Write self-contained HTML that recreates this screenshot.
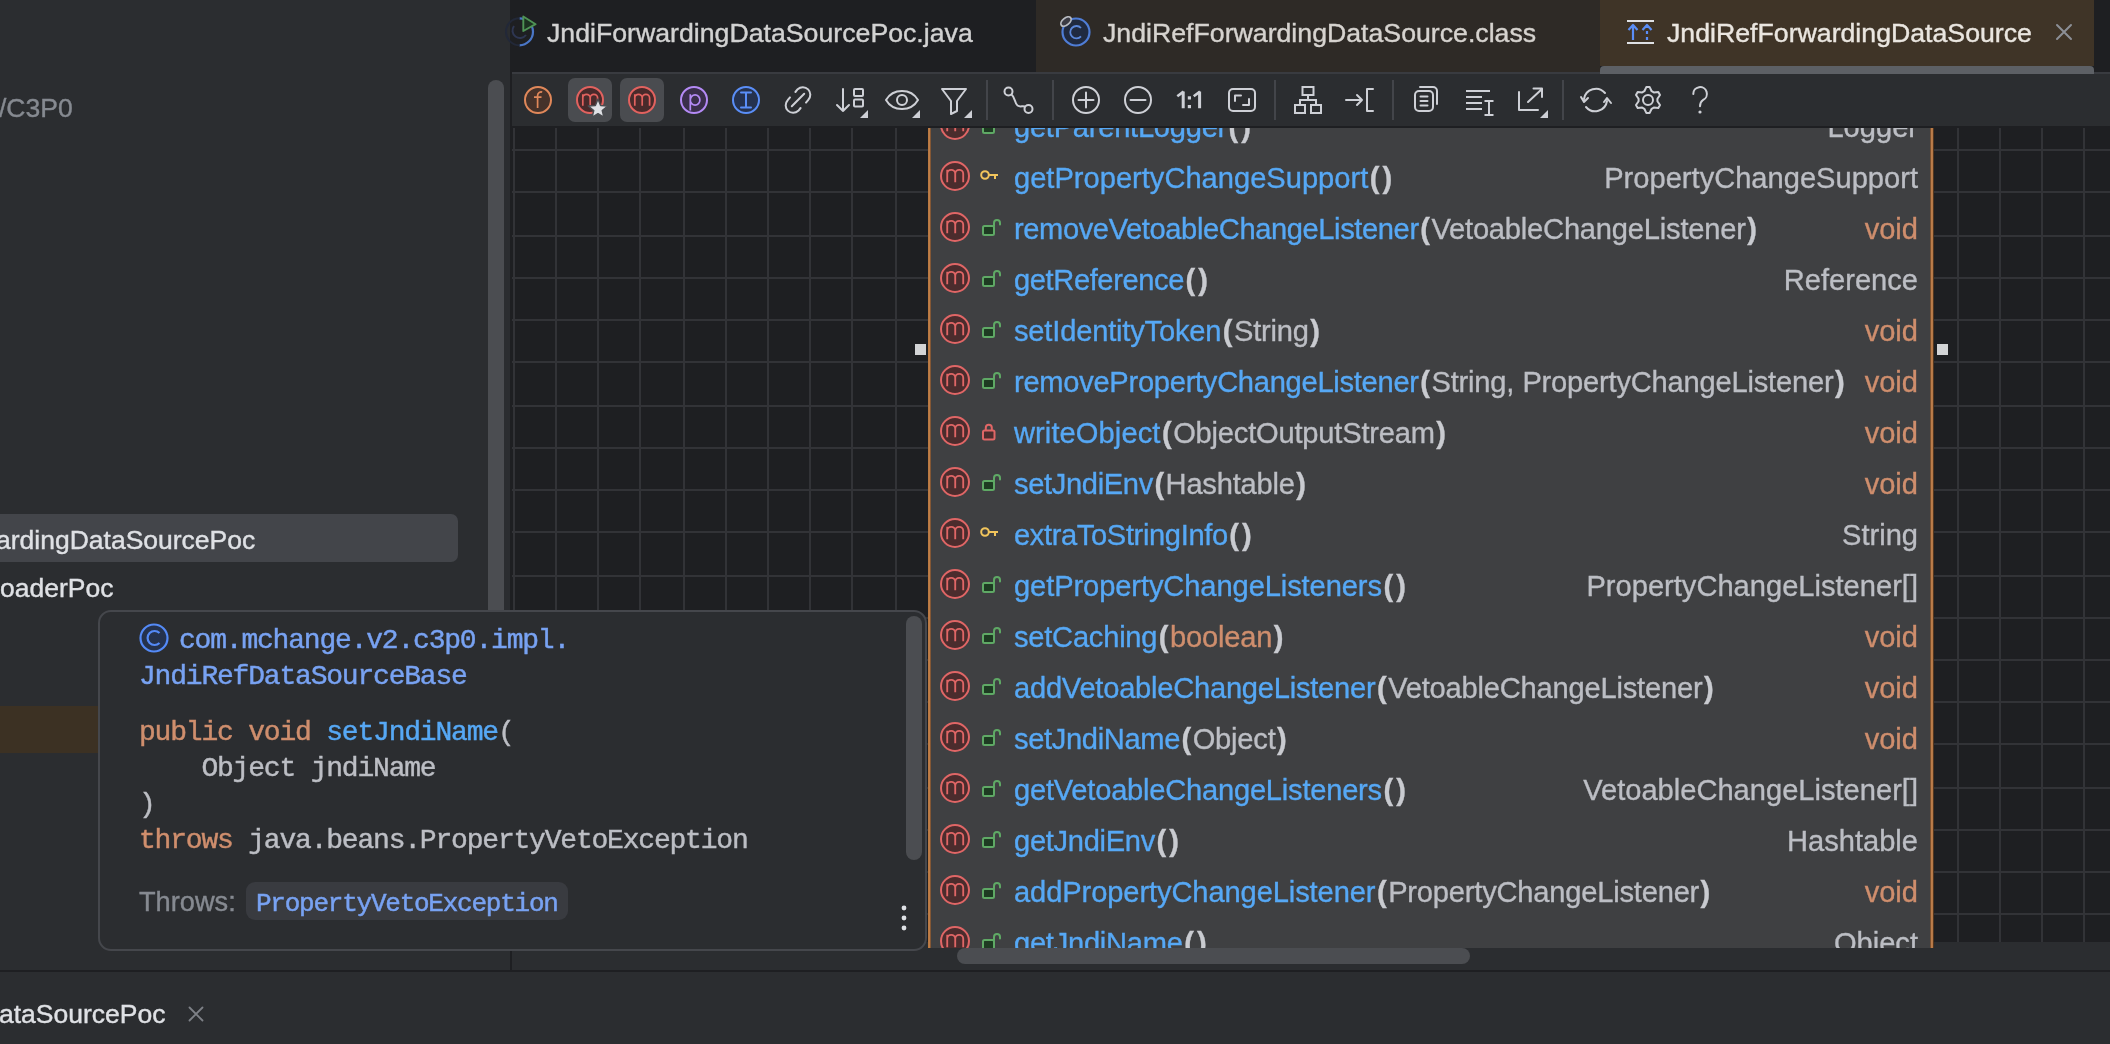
<!DOCTYPE html><html><head><meta charset="utf-8"><style>
*{margin:0;padding:0}
html,body{width:2110px;height:1044px;overflow:hidden;background:#2b2d30}
body{position:relative;font-family:'Liberation Sans', sans-serif}
.abs{position:absolute}
.t{position:absolute;white-space:pre;font-family:'Liberation Sans', sans-serif;-webkit-text-stroke:0.4px currentColor}
.row{position:absolute;left:86px;height:51px;line-height:51px;font-size:29.1px;white-space:pre;font-family:'Liberation Sans', sans-serif;color:#bcbec4;-webkit-text-stroke:0.35px currentColor}
.ret{position:absolute;right:16px;height:51px;line-height:51px;font-size:29.1px;white-space:pre;font-family:'Liberation Sans', sans-serif;-webkit-text-stroke:0.35px currentColor}
.pr{font-weight:bold;color:#c9cbd0;padding:0 1.5px;letter-spacing:0}
.code{position:absolute;font-family:'Liberation Mono', monospace;font-size:28px;letter-spacing:-1.2px;line-height:36px;white-space:pre;-webkit-text-stroke:0.45px currentColor}
</style></head><body><div style="position:absolute;left:0;top:0;width:2110px;height:1044px;overflow:hidden;will-change:transform"><div class="t" style="left:-1px;top:90px;font-size:26.5px;line-height:36px;color:#868a91">/C3P0</div><div class="abs" style="left:-10px;top:514px;width:468px;height:48px;border-radius:7px;background:#43454a"></div><div class="t" style="left:-4px;top:522px;font-size:26.5px;line-height:36px;color:#dfe1e5">ardingDataSourcePoc</div><div class="t" style="left:0px;top:570px;font-size:26.5px;line-height:36px;color:#dfe1e5">oaderPoc</div><div class="abs" style="left:0;top:706px;width:100px;height:47px;background:#3c3123"></div><div class="abs" style="left:488px;top:80px;width:16px;height:560px;border-radius:8px;background:#4b4d51"></div><div class="abs" style="left:510px;top:0;width:2px;height:970px;background:#1e1f22"></div><div class="abs" style="left:512px;top:0;width:1598px;height:72px;background:#1e1f22"></div><div class="abs" style="left:1036px;top:0;width:564px;height:72px;background:#2e2a26"></div><div class="abs" style="left:1600px;top:0;width:494px;height:66px;background:#3f3427"></div><div class="t" style="left:547px;top:15px;font-size:26.7px;line-height:36px;color:#d2d2d2">JndiForwardingDataSourcePoc.java</div><div class="t" style="left:1103px;top:15px;font-size:26.7px;line-height:36px;color:#d6d3cf">JndiRefForwardingDataSource.class</div><div class="t" style="left:1667px;top:15px;font-size:26.7px;line-height:36px;color:#eae6e0">JndiRefForwardingDataSource</div><svg style="position:absolute;left:0;top:0" width="2110" height="72" fill="none"><path d="M519.5 18.3 A13.5 13.5 0 0 1 519.5 45.3" stroke="#4a76c6" stroke-width="2.2"/><path d="M519.5 45.3 A13.5 13.5 0 0 1 519.5 18.3" stroke="#222838" stroke-width="2"/><path d="M514 26 A7 7 0 1 0 526 35" stroke="#2e3652" stroke-width="2"/><path d="M523.3 16.5 L535.6 24.2 L523.3 31 Z" stroke="#4f9355" stroke-width="1.9" fill="#1c3020" stroke-linejoin="round"/><circle cx="1076" cy="32" r="13.5" stroke="#4f7dd6" stroke-width="2.2" fill="#202a40"/><path d="M1081 28 a6.2 6.2 0 1 0 0 8.4" stroke="#5b87d9" stroke-width="1.8"/><ellipse cx="1066" cy="21.5" rx="6" ry="3.5" transform="rotate(-40 1066 21.5)" stroke="#b9bcc2" stroke-width="1.8" fill="#3b3b44"/><path d="M1627 21h27M1627 43h27" stroke="#dfe1e5" stroke-width="2"/><path d="M1633 40v-15M1628.5 30l4.5-5 4.5 5" stroke="#5a8ef7" stroke-width="2.2" stroke-linejoin="round"/><path d="M1647 40v-3M1647 34v-3M1647 28v-3M1642.5 30l4.5-5 4.5 5" stroke="#5a8ef7" stroke-width="2.2" stroke-linejoin="round"/><path d="M2057 25l14 14M2071 25l-14 14" stroke="#8c8f96" stroke-width="2" stroke-linecap="round"/></svg><div class="abs" style="left:512px;top:72px;width:1598px;height:2px;background:#393b40"></div><div class="abs" style="left:512px;top:74px;width:1598px;height:52px;background:#2b2d30"></div><div class="abs" style="left:512px;top:126px;width:1598px;height:2px;background:#1e1f22"></div><div class="abs" style="left:1600px;top:66px;width:494px;height:8px;border-radius:4px 4px 0 0;background:#5d6065"></div><svg style="position:absolute;left:0;top:0" width="2110" height="130" fill="none" stroke-linecap="round" stroke-linejoin="round"><rect x="568" y="78" width="44" height="44" rx="7" fill="#4a4c50"/><rect x="620" y="78" width="44" height="44" rx="7" fill="#4a4c50"/><circle cx="538" cy="100" r="13" stroke="#e0885a" stroke-width="2" fill="#45322a"/><path d="M537.6 108 V95.5 a3.6 3.6 0 0 1 4.6 -3.4 M534 97.2 h7.5" stroke="#e0885a" stroke-width="1.7" stroke-linecap="butt"/><circle cx="590" cy="100" r="13" stroke="#e2625f" stroke-width="2" fill="#492a2b"/><path transform="translate(-52,0)" d="M634.8 105.7 V94.3 M634.8 98 a3.7 3.7 0 0 1 7.4 0 V105.7 M642.2 98 a3.7 3.7 0 0 1 7.4 0 V105.7" stroke="#e2625f" stroke-width="1.7" stroke-linecap="butt"/><polygon points="598.00,99.00 600.65,105.56 607.70,106.05 602.28,110.59 604.00,117.45 598.00,113.70 592.00,117.45 593.72,110.59 588.30,106.05 595.35,105.56" fill="#dfe1e5" stroke="#4a4c50" stroke-width="1.5"/><circle cx="642" cy="100" r="13" stroke="#e2625f" stroke-width="2" fill="#492a2b"/><path transform="translate(0,0)" d="M634.8 105.7 V94.3 M634.8 98 a3.7 3.7 0 0 1 7.4 0 V105.7 M642.2 98 a3.7 3.7 0 0 1 7.4 0 V105.7" stroke="#e2625f" stroke-width="1.7" stroke-linecap="butt"/><circle cx="694" cy="100" r="13" stroke="#b48af5" stroke-width="2" fill="#3a2e4b"/><path d="M690.3 94.3 V110.5 M690.3 100 a4.8 5.2 0 1 0 9.6 0 a4.8 5.2 0 1 0 -9.6 0" stroke="#b48af5" stroke-width="1.7" stroke-linecap="butt"/><circle cx="746" cy="100" r="13" stroke="#5a8ef7" stroke-width="2" fill="#25324f"/><path d="M741 92.5h10M746 92.5v15M741 107.5h10" stroke="#5a8ef7" stroke-width="2"/><g stroke="#ced0d6" stroke-width="2"><path d="M795.4 92 L797.7 89.2 A7.5 7.5 0 0 1 808.3 99.8 L806 102.6"/><path d="M800.6 108 L798.3 110.8 A7.5 7.5 0 0 1 787.7 100.2 L790 97.4"/><path d="M791.8 106.2 L804.2 93.8"/></g><g stroke="#ced0d6" stroke-width="2"><path d="M843 89v22M837 105l6 6 6-6"/><rect x="854" y="89" width="9" height="7" rx="1"/><rect x="854" y="99.5" width="9" height="7" rx="1"/></g><path d="M868 110 v8 h-8 z" fill="#ced0d6" stroke="none"/><g stroke="#ced0d6" stroke-width="2"><path d="M886 100 C893 88, 911 88, 918 100 C911 112, 893 112, 886 100 Z"/><circle cx="902" cy="100" r="5"/></g><path d="M920 110 v8 h-8 z" fill="#ced0d6" stroke="none"/><path d="M942 89 h24 l-9 12 v10 l-6 3 v-13 z" stroke="#ced0d6" stroke-width="2"/><path d="M972 110 v8 h-8 z" fill="#ced0d6" stroke="none"/><rect x="986" y="80" width="2" height="40" fill="#43454a" stroke="none"/><g stroke="#ced0d6" stroke-width="2"><circle cx="1008.5" cy="91.5" r="4"/><circle cx="1028.5" cy="109" r="4"/><path d="M1011.5 94.5 c4 3 3 9 6 11 s5 0 7 1"/></g><rect x="1052" y="80" width="2" height="40" fill="#43454a" stroke="none"/><g stroke="#ced0d6" stroke-width="2"><circle cx="1086" cy="100" r="13"/><path d="M1078.5 100h15M1086 92.5v15"/><circle cx="1138" cy="100" r="13"/><path d="M1130.5 100h15"/></g><g stroke="#ced0d6" stroke-linecap="butt"><path d="M1183.2 91.5 V108.2 M1199.6 91.5 V108.2" stroke-width="3"/><path d="M1177.3 96.3 L1183.6 91.6 M1193.7 96.3 L1200 91.6" stroke-width="2.6" stroke-linejoin="miter"/></g><rect x="1187.8" y="96.3" width="3.2" height="3.2" fill="#ced0d6" stroke="none"/><rect x="1187.8" y="105" width="3.2" height="3.2" fill="#ced0d6" stroke="none"/><g stroke="#ced0d6" stroke-width="2"><rect x="1229" y="89" width="26" height="22" rx="4"/><path d="M1235 101v-5.5h6M1249 99v6h-6"/></g><rect x="1274" y="80" width="2" height="40" fill="#43454a" stroke="none"/><g stroke="#ced0d6" stroke-width="2" stroke-linecap="butt" stroke-linejoin="miter"><rect x="1302.5" y="87" width="11" height="8"/><rect x="1295" y="105" width="10" height="8"/><rect x="1311" y="105" width="10" height="8"/><path d="M1308 95v5M1300 105v-5h16v5"/></g><g stroke="#ced0d6" stroke-width="2"><path d="M1346 100h16M1357 95l5 5-5 5"/><path d="M1373 89h-6v22h6"/></g><rect x="1392" y="80" width="2" height="40" fill="#43454a" stroke="none"/><g stroke="#ced0d6" stroke-width="2"><path d="M1420 87 h13 a4 4 0 0 1 4 4 v13"/><rect x="1415" y="91" width="18" height="20" rx="4"/><path d="M1420.5 96.5h7M1420.5 101h7M1420.5 105.5h7"/></g><g stroke="#ced0d6" stroke-width="2" stroke-linecap="butt"><path d="M1466 91h24M1466 97h16M1466 103h16M1466 109h16"/><path d="M1489 101v14M1484.5 101h9M1484.5 115h9"/></g><g stroke="#ced0d6" stroke-width="2"><path d="M1519 92v18h19"/><path d="M1528 102l14-13M1533.5 88.5h8.5v8.5"/></g><path d="M1548 110 v8 h-8 z" fill="#ced0d6" stroke="none"/><rect x="1562" y="80" width="2" height="40" fill="#43454a" stroke="none"/><g stroke="#ced0d6" stroke-width="2"><path d="M1584 99 a12 12 0 0 1 21-6"/><path d="M1581 97l3 5 4-4"/><path d="M1607 101 a12 12 0 0 1 -21 6"/><path d="M1611 103l-4-5-3 4"/></g><polygon points="1646.30,87.11 1649.70,87.11 1651.64,91.22 1653.78,92.46 1658.31,92.09 1660.01,95.03 1657.42,98.76 1657.42,101.24 1660.01,104.97 1658.31,107.91 1653.78,107.54 1651.64,108.78 1649.70,112.89 1646.30,112.89 1644.36,108.78 1642.22,107.54 1637.69,107.91 1635.99,104.97 1638.58,101.24 1638.58,98.76 1635.99,95.03 1637.69,92.09 1642.22,92.46 1644.36,91.22" stroke="#ced0d6" stroke-width="2"/><circle cx="1648" cy="100" r="5" stroke="#ced0d6" stroke-width="2"/><g stroke="#ced0d6" stroke-width="2"><path d="M1693.3 94 a6.8 6.8 0 1 1 9.7 6 c-2.8 2 -3 3.5 -3 6.3"/></g><circle cx="1700" cy="112" r="1.6" fill="#ced0d6"/></svg><div class="abs" style="left:512px;top:128px;width:1598px;height:814px;background:#1e1f22"></div><svg style="position:absolute;left:512px;top:128px" width="1598" height="814"><rect x="1" y="0" width="2" height="814" fill="#323337"/><rect x="43" y="0" width="2" height="814" fill="#323337"/><rect x="85" y="0" width="2" height="814" fill="#323337"/><rect x="127" y="0" width="2" height="814" fill="#323337"/><rect x="171" y="0" width="2" height="814" fill="#323337"/><rect x="213" y="0" width="2" height="814" fill="#323337"/><rect x="255" y="0" width="2" height="814" fill="#323337"/><rect x="297" y="0" width="2" height="814" fill="#323337"/><rect x="339" y="0" width="2" height="814" fill="#323337"/><rect x="383" y="0" width="2" height="814" fill="#323337"/><rect x="1445" y="0" width="2" height="814" fill="#323337"/><rect x="1487" y="0" width="2" height="814" fill="#323337"/><rect x="1529" y="0" width="2" height="814" fill="#323337"/><rect x="1571" y="0" width="2" height="814" fill="#323337"/><rect x="0" y="21" width="1598" height="2" fill="#323337"/><rect x="0" y="63" width="1598" height="2" fill="#323337"/><rect x="0" y="107" width="1598" height="2" fill="#323337"/><rect x="0" y="149" width="1598" height="2" fill="#323337"/><rect x="0" y="191" width="1598" height="2" fill="#323337"/><rect x="0" y="233" width="1598" height="2" fill="#323337"/><rect x="0" y="277" width="1598" height="2" fill="#323337"/><rect x="0" y="319" width="1598" height="2" fill="#323337"/><rect x="0" y="361" width="1598" height="2" fill="#323337"/><rect x="0" y="403" width="1598" height="2" fill="#323337"/><rect x="0" y="447" width="1598" height="2" fill="#323337"/><rect x="0" y="489" width="1598" height="2" fill="#323337"/><rect x="0" y="531" width="1598" height="2" fill="#323337"/><rect x="0" y="573" width="1598" height="2" fill="#323337"/><rect x="0" y="615" width="1598" height="2" fill="#323337"/><rect x="0" y="659" width="1598" height="2" fill="#323337"/><rect x="0" y="701" width="1598" height="2" fill="#323337"/><rect x="0" y="743" width="1598" height="2" fill="#323337"/><rect x="0" y="785" width="1598" height="2" fill="#323337"/></svg><div class="abs" style="left:512px;top:942px;width:1598px;height:28px;background:#2b2d30"></div><div style="position:absolute;left:928px;top:128px;width:1006px;height:820px;background:#3f4042;overflow:hidden"><div style="position:absolute;left:0;top:0;width:3px;height:820px;background:linear-gradient(90deg,#b8763f 0,#c0804a 66%,#4a3020 100%)"></div><div style="position:absolute;right:0;top:0;width:4px;height:820px;background:linear-gradient(90deg,#3a2616 0,#b97a48 25%,#bf7f4c 60%,#5a3a20 85%,#2a1d12 100%)"></div><svg style="position:absolute;left:0;top:0" width="1006" height="820" fill="none"><circle cx="27" cy="-3" r="14" stroke="#e06666" stroke-width="2" fill="#4b2c2d"/><path transform="translate(27,-3) scale(1.08)" d="M-7.2 5.7 V-5.7 M-7.2 -2 a3.7 3.7 0 0 1 7.4 0 V5.7 M0.2 -2 a3.7 3.7 0 0 1 7.4 0 V5.7" stroke="#e06666" stroke-width="1.7" stroke-linecap="butt"/><rect x="55" y="-4" width="11" height="9" rx="1.5" stroke="#5fa965" stroke-width="2" fill="#1e3b22"/><path d="M66 -4 v-3 a3 3 0 0 1 6 0 v1.5" stroke="#5fa965" stroke-width="2" stroke-linecap="round"/><circle cx="27" cy="48" r="14" stroke="#e06666" stroke-width="2" fill="#4b2c2d"/><path transform="translate(27,48) scale(1.08)" d="M-7.2 5.7 V-5.7 M-7.2 -2 a3.7 3.7 0 0 1 7.4 0 V5.7 M0.2 -2 a3.7 3.7 0 0 1 7.4 0 V5.7" stroke="#e06666" stroke-width="1.7" stroke-linecap="butt"/><circle cx="57" cy="47" r="3.8" stroke="#f2c55c" stroke-width="2"/><path d="M61 47 h9 M67 47 v4" stroke="#f2c55c" stroke-width="2"/><circle cx="27" cy="99" r="14" stroke="#e06666" stroke-width="2" fill="#4b2c2d"/><path transform="translate(27,99) scale(1.08)" d="M-7.2 5.7 V-5.7 M-7.2 -2 a3.7 3.7 0 0 1 7.4 0 V5.7 M0.2 -2 a3.7 3.7 0 0 1 7.4 0 V5.7" stroke="#e06666" stroke-width="1.7" stroke-linecap="butt"/><rect x="55" y="98" width="11" height="9" rx="1.5" stroke="#5fa965" stroke-width="2" fill="#1e3b22"/><path d="M66 98 v-3 a3 3 0 0 1 6 0 v1.5" stroke="#5fa965" stroke-width="2" stroke-linecap="round"/><circle cx="27" cy="150" r="14" stroke="#e06666" stroke-width="2" fill="#4b2c2d"/><path transform="translate(27,150) scale(1.08)" d="M-7.2 5.7 V-5.7 M-7.2 -2 a3.7 3.7 0 0 1 7.4 0 V5.7 M0.2 -2 a3.7 3.7 0 0 1 7.4 0 V5.7" stroke="#e06666" stroke-width="1.7" stroke-linecap="butt"/><rect x="55" y="149" width="11" height="9" rx="1.5" stroke="#5fa965" stroke-width="2" fill="#1e3b22"/><path d="M66 149 v-3 a3 3 0 0 1 6 0 v1.5" stroke="#5fa965" stroke-width="2" stroke-linecap="round"/><circle cx="27" cy="201" r="14" stroke="#e06666" stroke-width="2" fill="#4b2c2d"/><path transform="translate(27,201) scale(1.08)" d="M-7.2 5.7 V-5.7 M-7.2 -2 a3.7 3.7 0 0 1 7.4 0 V5.7 M0.2 -2 a3.7 3.7 0 0 1 7.4 0 V5.7" stroke="#e06666" stroke-width="1.7" stroke-linecap="butt"/><rect x="55" y="200" width="11" height="9" rx="1.5" stroke="#5fa965" stroke-width="2" fill="#1e3b22"/><path d="M66 200 v-3 a3 3 0 0 1 6 0 v1.5" stroke="#5fa965" stroke-width="2" stroke-linecap="round"/><circle cx="27" cy="252" r="14" stroke="#e06666" stroke-width="2" fill="#4b2c2d"/><path transform="translate(27,252) scale(1.08)" d="M-7.2 5.7 V-5.7 M-7.2 -2 a3.7 3.7 0 0 1 7.4 0 V5.7 M0.2 -2 a3.7 3.7 0 0 1 7.4 0 V5.7" stroke="#e06666" stroke-width="1.7" stroke-linecap="butt"/><rect x="55" y="251" width="11" height="9" rx="1.5" stroke="#5fa965" stroke-width="2" fill="#1e3b22"/><path d="M66 251 v-3 a3 3 0 0 1 6 0 v1.5" stroke="#5fa965" stroke-width="2" stroke-linecap="round"/><circle cx="27" cy="303" r="14" stroke="#e06666" stroke-width="2" fill="#4b2c2d"/><path transform="translate(27,303) scale(1.08)" d="M-7.2 5.7 V-5.7 M-7.2 -2 a3.7 3.7 0 0 1 7.4 0 V5.7 M0.2 -2 a3.7 3.7 0 0 1 7.4 0 V5.7" stroke="#e06666" stroke-width="1.7" stroke-linecap="butt"/><rect x="55" y="302.5" width="11.5" height="9" rx="1.5" stroke="#e06666" stroke-width="2" fill="#4b2c2d"/><path d="M57.8 302.5 v-2.8 a3 3 0 0 1 6 0 v2.8" stroke="#e06666" stroke-width="2"/><circle cx="27" cy="354" r="14" stroke="#e06666" stroke-width="2" fill="#4b2c2d"/><path transform="translate(27,354) scale(1.08)" d="M-7.2 5.7 V-5.7 M-7.2 -2 a3.7 3.7 0 0 1 7.4 0 V5.7 M0.2 -2 a3.7 3.7 0 0 1 7.4 0 V5.7" stroke="#e06666" stroke-width="1.7" stroke-linecap="butt"/><rect x="55" y="353" width="11" height="9" rx="1.5" stroke="#5fa965" stroke-width="2" fill="#1e3b22"/><path d="M66 353 v-3 a3 3 0 0 1 6 0 v1.5" stroke="#5fa965" stroke-width="2" stroke-linecap="round"/><circle cx="27" cy="405" r="14" stroke="#e06666" stroke-width="2" fill="#4b2c2d"/><path transform="translate(27,405) scale(1.08)" d="M-7.2 5.7 V-5.7 M-7.2 -2 a3.7 3.7 0 0 1 7.4 0 V5.7 M0.2 -2 a3.7 3.7 0 0 1 7.4 0 V5.7" stroke="#e06666" stroke-width="1.7" stroke-linecap="butt"/><circle cx="57" cy="404" r="3.8" stroke="#f2c55c" stroke-width="2"/><path d="M61 404 h9 M67 404 v4" stroke="#f2c55c" stroke-width="2"/><circle cx="27" cy="456" r="14" stroke="#e06666" stroke-width="2" fill="#4b2c2d"/><path transform="translate(27,456) scale(1.08)" d="M-7.2 5.7 V-5.7 M-7.2 -2 a3.7 3.7 0 0 1 7.4 0 V5.7 M0.2 -2 a3.7 3.7 0 0 1 7.4 0 V5.7" stroke="#e06666" stroke-width="1.7" stroke-linecap="butt"/><rect x="55" y="455" width="11" height="9" rx="1.5" stroke="#5fa965" stroke-width="2" fill="#1e3b22"/><path d="M66 455 v-3 a3 3 0 0 1 6 0 v1.5" stroke="#5fa965" stroke-width="2" stroke-linecap="round"/><circle cx="27" cy="507" r="14" stroke="#e06666" stroke-width="2" fill="#4b2c2d"/><path transform="translate(27,507) scale(1.08)" d="M-7.2 5.7 V-5.7 M-7.2 -2 a3.7 3.7 0 0 1 7.4 0 V5.7 M0.2 -2 a3.7 3.7 0 0 1 7.4 0 V5.7" stroke="#e06666" stroke-width="1.7" stroke-linecap="butt"/><rect x="55" y="506" width="11" height="9" rx="1.5" stroke="#5fa965" stroke-width="2" fill="#1e3b22"/><path d="M66 506 v-3 a3 3 0 0 1 6 0 v1.5" stroke="#5fa965" stroke-width="2" stroke-linecap="round"/><circle cx="27" cy="558" r="14" stroke="#e06666" stroke-width="2" fill="#4b2c2d"/><path transform="translate(27,558) scale(1.08)" d="M-7.2 5.7 V-5.7 M-7.2 -2 a3.7 3.7 0 0 1 7.4 0 V5.7 M0.2 -2 a3.7 3.7 0 0 1 7.4 0 V5.7" stroke="#e06666" stroke-width="1.7" stroke-linecap="butt"/><rect x="55" y="557" width="11" height="9" rx="1.5" stroke="#5fa965" stroke-width="2" fill="#1e3b22"/><path d="M66 557 v-3 a3 3 0 0 1 6 0 v1.5" stroke="#5fa965" stroke-width="2" stroke-linecap="round"/><circle cx="27" cy="609" r="14" stroke="#e06666" stroke-width="2" fill="#4b2c2d"/><path transform="translate(27,609) scale(1.08)" d="M-7.2 5.7 V-5.7 M-7.2 -2 a3.7 3.7 0 0 1 7.4 0 V5.7 M0.2 -2 a3.7 3.7 0 0 1 7.4 0 V5.7" stroke="#e06666" stroke-width="1.7" stroke-linecap="butt"/><rect x="55" y="608" width="11" height="9" rx="1.5" stroke="#5fa965" stroke-width="2" fill="#1e3b22"/><path d="M66 608 v-3 a3 3 0 0 1 6 0 v1.5" stroke="#5fa965" stroke-width="2" stroke-linecap="round"/><circle cx="27" cy="660" r="14" stroke="#e06666" stroke-width="2" fill="#4b2c2d"/><path transform="translate(27,660) scale(1.08)" d="M-7.2 5.7 V-5.7 M-7.2 -2 a3.7 3.7 0 0 1 7.4 0 V5.7 M0.2 -2 a3.7 3.7 0 0 1 7.4 0 V5.7" stroke="#e06666" stroke-width="1.7" stroke-linecap="butt"/><rect x="55" y="659" width="11" height="9" rx="1.5" stroke="#5fa965" stroke-width="2" fill="#1e3b22"/><path d="M66 659 v-3 a3 3 0 0 1 6 0 v1.5" stroke="#5fa965" stroke-width="2" stroke-linecap="round"/><circle cx="27" cy="711" r="14" stroke="#e06666" stroke-width="2" fill="#4b2c2d"/><path transform="translate(27,711) scale(1.08)" d="M-7.2 5.7 V-5.7 M-7.2 -2 a3.7 3.7 0 0 1 7.4 0 V5.7 M0.2 -2 a3.7 3.7 0 0 1 7.4 0 V5.7" stroke="#e06666" stroke-width="1.7" stroke-linecap="butt"/><rect x="55" y="710" width="11" height="9" rx="1.5" stroke="#5fa965" stroke-width="2" fill="#1e3b22"/><path d="M66 710 v-3 a3 3 0 0 1 6 0 v1.5" stroke="#5fa965" stroke-width="2" stroke-linecap="round"/><circle cx="27" cy="762" r="14" stroke="#e06666" stroke-width="2" fill="#4b2c2d"/><path transform="translate(27,762) scale(1.08)" d="M-7.2 5.7 V-5.7 M-7.2 -2 a3.7 3.7 0 0 1 7.4 0 V5.7 M0.2 -2 a3.7 3.7 0 0 1 7.4 0 V5.7" stroke="#e06666" stroke-width="1.7" stroke-linecap="butt"/><rect x="55" y="761" width="11" height="9" rx="1.5" stroke="#5fa965" stroke-width="2" fill="#1e3b22"/><path d="M66 761 v-3 a3 3 0 0 1 6 0 v1.5" stroke="#5fa965" stroke-width="2" stroke-linecap="round"/><circle cx="27" cy="813" r="14" stroke="#e06666" stroke-width="2" fill="#4b2c2d"/><path transform="translate(27,813) scale(1.08)" d="M-7.2 5.7 V-5.7 M-7.2 -2 a3.7 3.7 0 0 1 7.4 0 V5.7 M0.2 -2 a3.7 3.7 0 0 1 7.4 0 V5.7" stroke="#e06666" stroke-width="1.7" stroke-linecap="butt"/><rect x="55" y="812" width="11" height="9" rx="1.5" stroke="#5fa965" stroke-width="2" fill="#1e3b22"/><path d="M66 812 v-3 a3 3 0 0 1 6 0 v1.5" stroke="#5fa965" stroke-width="2" stroke-linecap="round"/></svg><div class="row" style="top:-26px"><span style="color:#56a8f5;letter-spacing:-0.250px">getParentLogger</span><b class="pr">(</b><b class="pr">)</b></div><div class="ret" style="top:-26px;color:#bcbec4">Logger</div><div class="row" style="top:25px"><span style="color:#56a8f5;letter-spacing:0.000px">getPropertyChangeSupport</span><b class="pr">(</b><b class="pr">)</b></div><div class="ret" style="top:25px;color:#bcbec4">PropertyChangeSupport</div><div class="row" style="top:76px"><span style="color:#56a8f5;letter-spacing:-0.392px">removeVetoableChangeListener</span><b class="pr">(</b><span style="color:#bcbec4;letter-spacing:-0.2px">VetoableChangeListener</span><b class="pr">)</b></div><div class="ret" style="top:76px;color:#cf8e6d">void</div><div class="row" style="top:127px"><span style="color:#56a8f5;letter-spacing:-0.393px">getReference</span><b class="pr">(</b><b class="pr">)</b></div><div class="ret" style="top:127px;color:#bcbec4">Reference</div><div class="row" style="top:178px"><span style="color:#56a8f5;letter-spacing:-0.187px">setIdentityToken</span><b class="pr">(</b><span style="color:#bcbec4;letter-spacing:-0.2px">String</span><b class="pr">)</b></div><div class="ret" style="top:178px;color:#cf8e6d">void</div><div class="row" style="top:229px"><span style="color:#56a8f5;letter-spacing:-0.274px">removePropertyChangeListener</span><b class="pr">(</b><span style="color:#bcbec4;letter-spacing:-0.2px">String</span><span style="color:#bcbec4">, </span><span style="color:#bcbec4;letter-spacing:-0.2px">PropertyChangeListener</span><b class="pr">)</b></div><div class="ret" style="top:229px;color:#cf8e6d">void</div><div class="row" style="top:280px"><span style="color:#56a8f5;letter-spacing:0.087px">writeObject</span><b class="pr">(</b><span style="color:#bcbec4;letter-spacing:-0.2px">ObjectOutputStream</span><b class="pr">)</b></div><div class="ret" style="top:280px;color:#cf8e6d">void</div><div class="row" style="top:331px"><span style="color:#56a8f5;letter-spacing:-0.345px">setJndiEnv</span><b class="pr">(</b><span style="color:#bcbec4;letter-spacing:-0.2px">Hashtable</span><b class="pr">)</b></div><div class="ret" style="top:331px;color:#cf8e6d">void</div><div class="row" style="top:382px"><span style="color:#56a8f5;letter-spacing:-0.364px">extraToStringInfo</span><b class="pr">(</b><b class="pr">)</b></div><div class="ret" style="top:382px;color:#bcbec4">String</div><div class="row" style="top:433px"><span style="color:#56a8f5;letter-spacing:-0.094px">getPropertyChangeListeners</span><b class="pr">(</b><b class="pr">)</b></div><div class="ret" style="top:433px;color:#bcbec4">PropertyChangeListener[]</div><div class="row" style="top:484px"><span style="color:#56a8f5;letter-spacing:-0.229px">setCaching</span><b class="pr">(</b><span style="color:#cf8e6d;letter-spacing:-0.2px">boolean</span><b class="pr">)</b></div><div class="ret" style="top:484px;color:#cf8e6d">void</div><div class="row" style="top:535px"><span style="color:#56a8f5;letter-spacing:-0.232px">addVetoableChangeListener</span><b class="pr">(</b><span style="color:#bcbec4;letter-spacing:-0.2px">VetoableChangeListener</span><b class="pr">)</b></div><div class="ret" style="top:535px;color:#cf8e6d">void</div><div class="row" style="top:586px"><span style="color:#56a8f5;letter-spacing:-0.348px">setJndiName</span><b class="pr">(</b><span style="color:#bcbec4;letter-spacing:-0.2px">Object</span><b class="pr">)</b></div><div class="ret" style="top:586px;color:#cf8e6d">void</div><div class="row" style="top:637px"><span style="color:#56a8f5;letter-spacing:-0.221px">getVetoableChangeListeners</span><b class="pr">(</b><b class="pr">)</b></div><div class="ret" style="top:637px;color:#bcbec4">VetoableChangeListener[]</div><div class="row" style="top:688px"><span style="color:#56a8f5;letter-spacing:-0.298px">getJndiEnv</span><b class="pr">(</b><b class="pr">)</b></div><div class="ret" style="top:688px;color:#bcbec4">Hashtable</div><div class="row" style="top:739px"><span style="color:#56a8f5;letter-spacing:-0.100px">addPropertyChangeListener</span><b class="pr">(</b><span style="color:#bcbec4;letter-spacing:-0.2px">PropertyChangeListener</span><b class="pr">)</b></div><div class="ret" style="top:739px;color:#cf8e6d">void</div><div class="row" style="top:790px"><span style="color:#56a8f5;letter-spacing:-0.250px">getJndiName</span><b class="pr">(</b><b class="pr">)</b></div><div class="ret" style="top:790px;color:#bcbec4">Object</div></div><div class="abs" style="left:915px;top:344px;width:11px;height:11px;background:#d3d4d6"></div><div class="abs" style="left:1937px;top:344px;width:11px;height:11px;background:#d3d4d6"></div><div class="abs" style="left:957px;top:948px;width:513px;height:16px;border-radius:8px;background:#4b4d51"></div><div class="abs" style="left:0;top:970px;width:2110px;height:2px;background:#1e1f22"></div><div class="t" style="left:-1px;top:996px;font-size:26.5px;line-height:36px;color:#dfe1e5">ataSourcePoc</div><svg style="position:absolute;left:180px;top:1000px" width="30" height="30"><path d="M9.5 7.5l13 13M22.5 7.5l-13 13" stroke="#7e8187" stroke-width="1.8" stroke-linecap="round"/></svg><div style="position:absolute;left:98px;top:610px;width:829px;height:341px;box-sizing:border-box;border:2px solid #45474c;border-radius:13px;background:#2b2d30;overflow:hidden"></div><div style="position:absolute;left:906px;top:616px;width:16px;height:244px;border-radius:8px;background:#4b4d51"></div><svg style="position:absolute;left:0;top:600px" width="200" height="80" fill="none"><circle cx="154" cy="38" r="13.5" stroke="#548af7" stroke-width="2.2" fill="#25324d"/><path d="M159.5 33 a7 7 0 1 0 0 10" stroke="#548af7" stroke-width="2.2"/></svg><div class="code" style="left:179px;top:623px"><span style="color:#78a2f2">com.mchange.v2.c3p0.impl.</span></div><div class="code" style="left:139px;top:659px"><span style="color:#78a2f2">JndiRefDataSourceBase</span></div><div class="code" style="left:139px;top:715px"><span style="color:#cf8e6d">public void </span><span style="color:#56a8f5">setJndiName</span><span style="color:#bcbec4">(</span></div><div class="code" style="left:139px;top:751px"><span style="color:#bcbec4">    Object jndiName</span></div><div class="code" style="left:139px;top:787px"><span style="color:#bcbec4">)</span></div><div class="code" style="left:139px;top:823px"><span style="color:#cf8e6d">throws </span><span style="color:#bcbec4">java.beans.PropertyVetoException</span></div><div style="position:absolute;left:139px;top:884px;font-family:'Liberation Sans', sans-serif;font-size:27.2px;line-height:36px;color:#868a91;white-space:pre;-webkit-text-stroke:0.4px currentColor">Throws:</div><div style="position:absolute;left:246px;top:882px;width:322px;height:38px;border-radius:9px;background:#393b40"></div><div style="position:absolute;left:256px;top:886px;font-family:'Liberation Mono', monospace;font-size:26px;letter-spacing:-1.24px;line-height:36px;color:#78a2f2;white-space:pre;-webkit-text-stroke:0.5px currentColor">PropertyVetoException</div><svg style="position:absolute;left:890px;top:895px" width="30" height="45"><circle cx="14" cy="13" r="2.4" fill="#dfe1e5"/><circle cx="14" cy="23" r="2.4" fill="#dfe1e5"/><circle cx="14" cy="33" r="2.4" fill="#dfe1e5"/></svg></div></body></html>
